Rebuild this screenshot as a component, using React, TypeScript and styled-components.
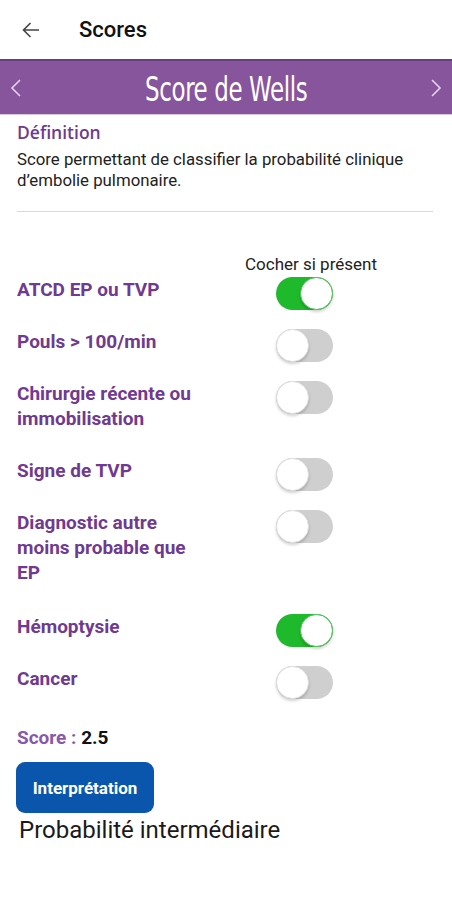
import React from "react";
import styled, { createGlobalStyle } from "styled-components";

const Global = createGlobalStyle`
  html, body { margin: 0; padding: 0; background: #fff; }
  body { font-family: Roboto, "Noto Sans", sans-serif; color: #222; }
  * { box-sizing: border-box; }
`;

const Page = styled.div`
  width: 452px;
  min-height: 900px;
  background: #fff;
  display: flex;
  flex-direction: column;
`;

const AppBar = styled.div`
  height: 59px;
  display: flex;
  align-items: center;
  padding-left: 20px;
  gap: 37px;
`;

const BackButton = styled.div`
  width: 22px;
  height: 22px;
  display: flex;
  align-items: center;
  justify-content: center;
`;

const AppTitle = styled.div`
  font-family: Roboto, sans-serif;
  font-size: 22px;
  font-weight: 500;
  color: #111;
`;

const Banner = styled.div`
  height: 56px;
  background: #87559c;
  border-top: 2px solid #6a3d7e;
  border-bottom: 1px solid #d9c8e2;
  display: flex;
  align-items: center;
  justify-content: space-between;
  padding: 0 9px;
`;

const Chevron = styled.div`
  width: 14px;
  height: 22px;
  display: flex;
  align-items: center;
  justify-content: center;
`;

const BannerTitle = styled.div`
  font-family: "DejaVu Sans Condensed", "DejaVu Sans", sans-serif;
  font-size: 34px;
  font-weight: 400;
  color: #fff;
  letter-spacing: -0.5px;
  transform: scaleX(0.75);
  white-space: nowrap;
  margin-top: 2px;
`;

const Content = styled.div`
  padding: 6px 19px 0 17px;
  display: flex;
  flex-direction: column;
`;

const SectionTitle = styled.div`
  font-family: "Open Sans", sans-serif;
  font-size: 17.5px;
  font-weight: 600;
  color: #6f3a8f;
  line-height: 22px;
`;

const Description = styled.div`
  font-family: Roboto, sans-serif;
  font-size: 16.8px;
  line-height: 21px;
  color: #222;
  margin-top: 6px;
`;

const Divider = styled.hr`
  border: none;
  border-top: 1px solid #d8d8d8;
  margin: 20px 0 0 0;
`;

const Grid = styled.div`
  display: grid;
  grid-template-columns: 259px 58px;
  margin-top: 41px;
`;

const ColumnHeader = styled.div`
  grid-column: 2;
  justify-self: center;
  white-space: nowrap;
  font-size: 17px;
  line-height: 22px;
  color: #222;
  margin: 0 0 2px 12px;
`;

const Label = styled.div<{ $lines: number }>`
  font-family: Roboto, sans-serif;
  font-size: 19px;
  font-weight: 700;
  line-height: 25px;
  color: #6f3a8f;
  width: 186px;
  padding-bottom: ${(p) => (p.$lines > 2 ? 29 : 27)}px;
`;

const Track = styled.div<{ $on: boolean }>`
  width: 57px;
  height: 33px;
  border-radius: 17px;
  background: ${(p) => (p.$on ? "#1fba2b" : "#cfcfcf")};
  position: relative;
`;

const Thumb = styled.div<{ $on: boolean }>`
  position: absolute;
  top: 0;
  left: ${(p) => (p.$on ? "24px" : "0")};
  width: 33px;
  height: 33px;
  border-radius: 50%;
  background: #fff;
  border: 1px solid ${(p) => (p.$on ? "#4cc255" : "#e0e0e0")};
  box-shadow: 0 2px 3px rgba(0, 0, 0, 0.18);
`;

const ScoreLine = styled.div`
  font-size: 19px;
  font-weight: 700;
  line-height: 24px;
  margin-top: 8px;
`;

const ScoreKey = styled.span`
  color: #8a58a8;
`;

const ScoreValue = styled.span`
  color: #111;
`;

const InterpButton = styled.button`
  margin-top: 12px;
  margin-left: -1px;
  width: 138px;
  height: 51px;
  border: none;
  border-radius: 9px;
  background: #0b56ad;
  color: #fff;
  font-family: Roboto, sans-serif;
  font-size: 17px;
  font-weight: 700;
  padding: 0;
`;

const Result = styled.div`
  font-family: Roboto, sans-serif;
  font-size: 24px;
  line-height: 28px;
  color: #1a1a1a;
  margin-top: 3px;
  padding-left: 2px;
`;

const items: { label: string; on: boolean; lines: number }[] = [
  { label: "ATCD EP ou TVP", on: true, lines: 1 },
  { label: "Pouls > 100/min", on: false, lines: 1 },
  { label: "Chirurgie récente ou immobilisation", on: false, lines: 2 },
  { label: "Signe de TVP", on: false, lines: 1 },
  { label: "Diagnostic autre moins probable que EP", on: false, lines: 3 },
  { label: "Hémoptysie", on: true, lines: 1 },
  { label: "Cancer", on: false, lines: 1 },
];

const Toggle = ({ on }: { on: boolean }) => (
  <Track $on={on}>
    <Thumb $on={on} />
  </Track>
);

export default function App() {
  return (
    <Page>
      <Global />
      <AppBar>
        <BackButton>
          <svg width="20" height="20" viewBox="0 0 20 20" fill="none" stroke="#444" strokeWidth="1.6">
            <path d="M18 10H2.5M9.5 3L2.5 10l7 7" />
          </svg>
        </BackButton>
        <AppTitle>Scores</AppTitle>
      </AppBar>
      <Banner>
        <Chevron>
          <svg width="12" height="20" viewBox="0 0 12 20" fill="none" stroke="#e6d4f0" strokeWidth="1.6">
            <path d="M10 2L2 10l8 8" />
          </svg>
        </Chevron>
        <BannerTitle>Score de Wells</BannerTitle>
        <Chevron>
          <svg width="12" height="20" viewBox="0 0 12 20" fill="none" stroke="#e6d4f0" strokeWidth="1.6">
            <path d="M2 2l8 8-8 8" />
          </svg>
        </Chevron>
      </Banner>
      <Content>
        <SectionTitle>Définition</SectionTitle>
        <Description>
          Score permettant de classifier la probabilité clinique d’embolie pulmonaire.
        </Description>
        <Divider />
        <Grid>
          <ColumnHeader>Cocher si présent</ColumnHeader>
          {items.map((it) => (
            <React.Fragment key={it.label}>
              <Label $lines={it.lines}>{it.label}</Label>
              <Toggle on={it.on} />
            </React.Fragment>
          ))}
        </Grid>
        <ScoreLine>
          <ScoreKey>Score : </ScoreKey>
          <ScoreValue>2.5</ScoreValue>
        </ScoreLine>
        <div>
          <InterpButton>Interprétation</InterpButton>
        </div>
        <Result>Probabilité intermédiaire</Result>
      </Content>
    </Page>
  );
}
